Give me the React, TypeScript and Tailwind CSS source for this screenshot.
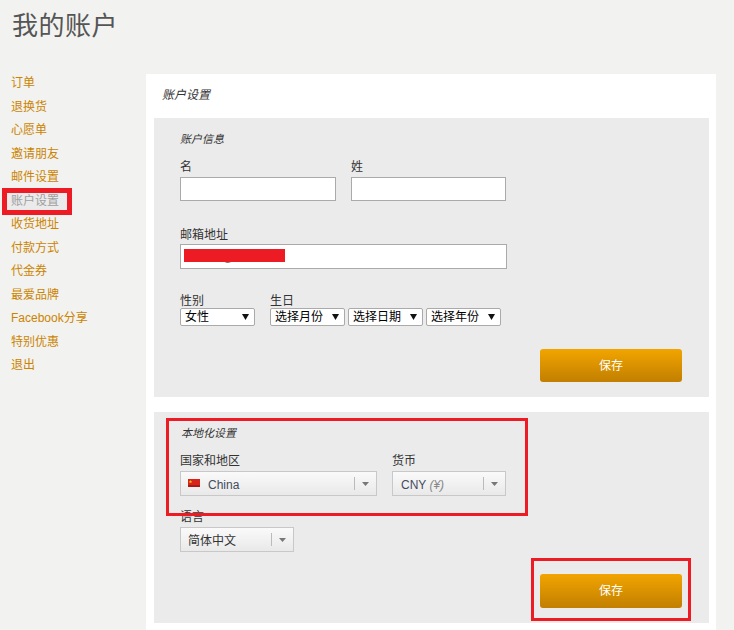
const navItems = ['订单', '退换货', '心愿单', '邀请朋友', '邮件设置', '账户设置', '收货地址', '付款方式', '代金券', '最爱品牌', 'Facebook分享', '特别优惠', '退出'];

function NavList() {
  return (
    <ul className="flex flex-col pt-[20px]">
      {navItems.map((item) => (
        <li key={item} className="h-[23.5px] pl-[11px] text-[12px] leading-[23.5px]">
          {item === '账户设置' ? (
            <span className="relative -ml-[4px] block h-[17px] w-[60px] bg-[#ebebeb] pl-[4px] leading-[17px] text-[#a0a0a0] mt-[3px]">
              {item}
              {/* annotation frame */}
              <span className="absolute -left-[5px] -top-[5px] h-[27px] w-[70px] border-[5px] border-[#ed1c24]" />
            </span>
          ) : (
            <a className="text-[#cc8400]">{item}</a>
          )}
        </li>
      ))}
    </ul>
  );
}

function Field({ label, width }: { label: string; width: string }) {
  return (
    <div className={width}>
      <label className="block h-[19px] text-[12px] leading-[19px] text-[#333]">{label}</label>
      <input className="block h-[24px] w-full border border-[#aaa] bg-white" />
    </div>
  );
}

function MiniSelect({ value, width }: { value: string; width: string }) {
  return (
    <div className={`flex h-[18px] items-center justify-between rounded-[2px] border border-[#aaa] bg-white pl-[4px] pr-[5px] text-[12px] text-black ${width}`}>
      <span>{value}</span>
      <svg width="7" height="6" viewBox="0 0 7 6"><path d="M0 0h7L3.5 6z" fill="#111" /></svg>
    </div>
  );
}

function FancySelect({ children, width, caretWidth }: { children: React.ReactNode; width: string; caretWidth: string }) {
  return (
    <div className={`flex h-[25px] items-center justify-between border border-[#c8c8c8] bg-gradient-to-b from-[#fafafa] to-[#e9e9e9] text-[12px] text-[#444a5e] ${width}`}>
      <div className="flex items-center pl-[7px] pt-[2px]">{children}</div>
      <div className={`flex h-[13px] items-center justify-center border-l border-[#bbb] ${caretWidth}`}>
        <svg width="7" height="4" viewBox="0 0 7 4"><path d="M0 0h7L3.5 4z" fill="#777" /></svg>
      </div>
    </div>
  );
}

function SaveButton({ height }: { height: string }) {
  return (
    <button className={`flex w-[142px] items-center justify-center rounded-[3px] bg-gradient-to-b from-[#f2a500] to-[#c27f00] text-[12px] text-white ${height}`}>
      保存
    </button>
  );
}

export default function App() {
  return (
    <div className="h-[630px] overflow-hidden bg-[#f2f2f0] font-['Liberation_Sans','Noto_Sans_CJK_SC',sans-serif]">
      <h1 className="h-[52px] pl-[12px] pt-[6px] text-[26px] leading-[40px] tracking-[0.5px] text-[#555]">我的账户</h1>
      <div className="flex">
        <aside className="w-[146px] shrink-0">
          <NavList />
        </aside>
        <main className="mt-[22px] w-[570px] bg-white px-[8px] pb-[40px]">
          <h2 className="h-[44px] pl-[8px] text-[12px] italic leading-[42px] text-[#333]">账户设置</h2>

          {/* account info */}
          <section className="h-[279px] w-[555px] bg-[#ebebeb] pl-[26px] pt-[13px]">
            <h3 className="h-[17px] text-[11px] italic leading-[17px] text-[#333]">账户信息</h3>
            <div className="mt-[10px] flex gap-[15px]">
              <Field label="名" width="w-[156px]" />
              <Field label="姓" width="w-[155px]" />
            </div>
            <div className="mt-[24px] w-[327px]">
              <label className="block h-[19px] text-[12px] leading-[21px] text-[#333]">邮箱地址</label>
              <div className="relative h-[25px] border border-[#aaa] bg-white">
                <span className="absolute left-[41px] top-[5px] text-[12px] leading-[14px] text-[#777]">@</span>
                <span className="absolute left-[3px] top-[4px] h-[13px] w-[101px] bg-[#ed1c24]" />
              </div>
            </div>
            <div className="mt-[24px] flex gap-[15px]">
              <div>
                <label className="block h-[15px] text-[12px] leading-[17px] text-[#333]">性别</label>
                <MiniSelect value="女性" width="w-[75px]" />
              </div>
              <div>
                <label className="block h-[15px] text-[12px] leading-[17px] text-[#333]">生日</label>
                <div className="flex gap-[3px]">
                  <MiniSelect value="选择月份" width="w-[75px]" />
                  <MiniSelect value="选择日期" width="w-[75px]" />
                  <MiniSelect value="选择年份" width="w-[75px]" />
                </div>
              </div>
            </div>
            <div className="mt-[23px] pl-[360px]">
              <SaveButton height="h-[33px]" />
            </div>
          </section>

          {/* localization */}
          <section className="relative mt-[15px] h-[211px] w-[555px] bg-[#ebebeb] pl-[26px] pt-[13px]">
            <h3 className="h-[17px] pl-px text-[11px] italic leading-[17px] text-[#333]">本地化设置</h3>
            <div className="mt-[10px] flex gap-[15px]">
              <div>
                <label className="block h-[19px] text-[12px] leading-[19px] text-[#333]">国家和地区</label>
                <FancySelect width="w-[197px]" caretWidth="w-[22px]">
                  <svg width="12" height="8" viewBox="0 0 12 8" className="-mt-[4px]">
                    <rect width="12" height="8" fill="#d8231a" />
                    <path d="M2.5 1l.5 1.2h1.2l-1 .8.4 1.3-1.1-.8-1.1.8.4-1.3-1-.8H2z" fill="#f7d000" />
                    <rect y="6" width="12" height="2" fill="#a81a14" />
                  </svg>
                  <span className="ml-[8px]">China</span>
                </FancySelect>
              </div>
              <div>
                <label className="block h-[19px] text-[12px] leading-[19px] text-[#333]">货币</label>
                <FancySelect width="w-[114px]" caretWidth="w-[22px]">
                  <span className="ml-px">CNY <i className="text-[#888]">(¥)</i></span>
                </FancySelect>
              </div>
            </div>
            <div className="mt-[12px]">
              <label className="block h-[19px] text-[12px] leading-[19px] text-[#333]">语言</label>
              <FancySelect width="w-[114px]" caretWidth="w-[22px]">
                <span className="text-[#333]">简体中文</span>
              </FancySelect>
            </div>
            <div className="mt-[22px] pl-[360px]">
              <SaveButton height="h-[34px]" />
            </div>

            {/* annotation frames */}
            <div className="absolute left-[12px] top-[6px] h-[98px] w-[362px] border-[3px] border-[#ed1c24]" />
            <div className="absolute left-[377px] top-[146px] h-[63px] w-[160px] border-[3px] border-[#ed1c24]" />
          </section>
        </main>
      </div>
    </div>
  );
}
